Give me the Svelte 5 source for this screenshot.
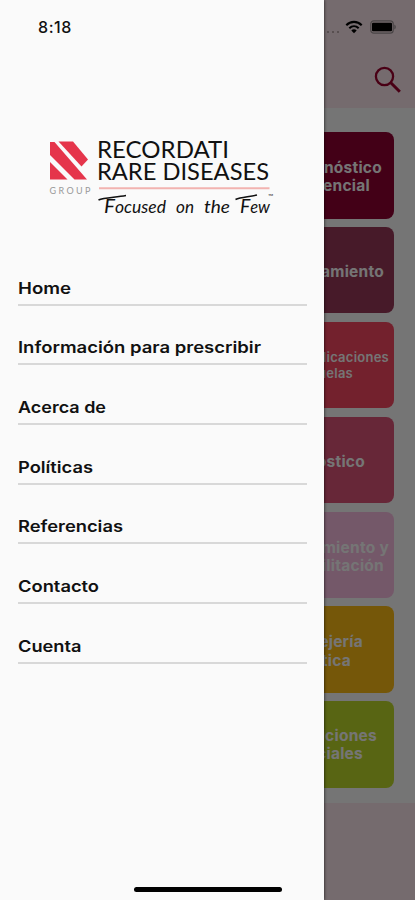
<script lang="ts">
	type Line = { text: string; end: number };
	type Card = { tone: string; small?: boolean; lines: Line[] };

	const menu = [
		{ label: 'Home', width: 53 },
		{ label: 'Información para prescribir', width: 243 },
		{ label: 'Acerca de', width: 88 },
		{ label: 'Políticas', width: 75 },
		{ label: 'Referencias', width: 105 },
		{ label: 'Contacto', width: 81 },
		{ label: 'Cuenta', width: 63.5 }
	];

	// end = distance from the right edge of the card
	const cards: Card[] = [
		{ tone: 'wine', lines: [{ text: 'Diagnóstico', end: 12 }, { text: 'diferencial', end: 24 }] },
		{ tone: 'plum', lines: [{ text: 'Tratamiento', end: 10 }] },
		{ tone: 'red', small: true, lines: [{ text: 'Complicaciones', end: 5 }, { text: 'y secuelas', end: 41 }] },
		{ tone: 'rose', lines: [{ text: 'Pronóstico', end: 29 }] },
		{ tone: 'pink', lines: [{ text: 'Seguimiento y', end: 5 }, { text: 'rehabilitación', end: 10 }] },
		{ tone: 'amber', lines: [{ text: 'Consejería', end: 31 }, { text: 'genética', end: 43 }] },
		{ tone: 'lime', lines: [{ text: 'Condiciones', end: 17 }, { text: 'especiales', end: 31 }] }
	];
</script>

<div class="screen">
	<main class="page">
		<header>
			<div class="status">
				<span class="dots"><i></i><i></i><i></i><i></i></span>
				<svg class="wifi" width="18" height="14" viewBox="0 0 18 14">
					<path d="M1.3 5.2C5.7 .8 12.3 .8 16.7 5.2M4.3 8.2c2.8-2.7 6.6-2.7 9.4 0" fill="none" stroke="#000" stroke-width="2.1" />
					<path d="M6.3 10.4c1.6-1.4 3.8-1.4 5.4 0L9 13.2z" />
				</svg>
				<svg class="battery" width="27" height="14" viewBox="0 0 27 14">
					<rect x=".8" y=".8" width="22.4" height="12.4" rx="3" fill="none" stroke="#a09699" stroke-width="1.2" />
					<rect x="2" y="2.7" width="20" height="8.6" rx="1" />
					<path d="M24.3 4.5c2 .8 2 4.2 0 5z" fill="#a09699" />
				</svg>
			</div>
			<svg class="search" width="28" height="28" viewBox="0 0 28 28" fill="none" stroke="#a0002f">
				<circle cx="10.5" cy="10.5" r="8.6" stroke-width="2.3" />
				<path d="M16.8 16.8l9 9" stroke-width="3" />
			</svg>
		</header>

		<section class="cards">
			{#each cards as card (card.tone)}
				<article class={card.tone} class:small={card.small}>
					{#each card.lines as line (line.text)}
						<span style:padding-right={`${line.end}px`}>{line.text}</span>
					{/each}
				</article>
			{/each}
		</section>
	</main>

	<div class="scrim"></div>

	<aside class="drawer">
		<time>8:18</time>

		<svg class="logo" width="230" height="98" viewBox="48 128 230 98">
			<g fill="#e5354b">
				<path d="M58.5 141.5H73L88 159.5L81.5 166.5Z" />
				<path d="M50 142H54.5L87 179.5H74.5L50 155Z" />
				<path d="M50 162L67.5 179.5H50Z" />
			</g>
			<text class="group" x="49.5" y="194" textLength="41" lengthAdjust="spacing">GROUP</text>
			<text class="brand" x="97" y="157.5" textLength="132" lengthAdjust="spacingAndGlyphs">RECORDATI</text>
			<text class="brand" x="97" y="179.5" textLength="172" lengthAdjust="spacingAndGlyphs">RARE DISEASES</text>
			<path d="M99 188.3H269.5" stroke="#f2b3b0" stroke-width="2" />
			<path class="swash" d="M98.5 200C104 197.5 115 197.5 126 195.5M235.5 199.5C241 197 249 197 257 195" />
			<text class="tagline" x="104" y="213" textLength="62" lengthAdjust="spacingAndGlyphs"><tspan class="cap">F</tspan>ocused</text>
			<text class="tagline" x="176" y="213" textLength="18" lengthAdjust="spacingAndGlyphs">on</text>
			<text class="tagline" x="204" y="213" textLength="26" lengthAdjust="spacingAndGlyphs">the</text>
			<text class="tagline" x="240" y="213" textLength="30" lengthAdjust="spacingAndGlyphs"><tspan class="cap">F</tspan>ew</text>
			<text class="tm" x="268" y="199">™</text>
		</svg>

		<nav>
			{#each menu as item (item.label)}
				<a href="#menu">
					<svg width="289" height="26">
						<text x="0" y="17.8" textLength={item.width} lengthAdjust="spacingAndGlyphs">{item.label}</text>
					</svg>
				</a>
			{/each}
		</nav>

		<div class="home-bar"></div>
	</aside>
</div>

<style>
	:global(body) { margin: 0; }
	.screen { position: relative; width: 415px; height: 900px; overflow: hidden; font-family: Inter, "Open Sans", sans-serif; }
	.page { display: flex; flex-direction: column; height: 900px; background: #ffe9ef; }
	header { display: flex; flex-direction: column; align-items: flex-end; height: 108px; }
	.status { display: flex; align-items: center; height: 14px; padding: 20px 18px 0 0; }
	.dots { display: flex; gap: 3px; margin: 9px 6px 0 0; }
	.dots i { width: 2px; height: 2px; border-radius: 50%; background: #a99; }
	.battery { margin-left: 7px; }
	.search { margin: 32px 13px 0 0; }
	.cards { display: flex; flex-direction: column; align-items: flex-end; gap: 8.4px; height: 671px; padding: 24px 21px 0 0; background: #fefefe; }
	article { display: flex; flex-direction: column; justify-content: center; flex: none; box-sizing: border-box; width: 184px; height: 86.5px; padding-top: 4px; border-radius: 8px; color: #fff; font-size: 15.5px; font-weight: 700; line-height: 18.3px; letter-spacing: .25px; text-align: right; }
	article.small { font-size: 13px; font-weight: 600; line-height: 16px; padding-top: 0; }
	.wine { background: #920034; }
	.plum { background: #9c3a5b; }
	.red { background: #fa4862; }
	.rose { background: #e0557a; }
	.pink { background: #fcbfe4; }
	.amber { background: #ffbd14; }
	article.lime { padding-top: 1px; background: #c1dc2b; }
	.scrim { position: absolute; inset: 0; background: rgba(0, 0, 0, .54); }
	.drawer { position: absolute; inset: 0 auto 0 0; display: flex; flex-direction: column; width: 324px; background: #fafafa; box-shadow: 0 0 3px rgba(0, 0, 0, .8); }
	time { height: 111px; padding: 17px 0 0 38px; font-size: 16px; font-weight: 500; line-height: 20px; letter-spacing: .6px; color: #111; }
	.logo { flex: none; margin-left: 48px; }
	.group { font: 9px Lato, sans-serif; fill: #999; }
	.brand { font: 24px Lato, sans-serif; fill: #111; }
	.tagline { font: italic 400 17px Lato, sans-serif; fill: #111; }
	.cap { font-size: 20px; }
	.swash { fill: none; stroke: #111; stroke-width: 1.6; }
	.tm { font: 7px Lato, sans-serif; fill: #333; }
	nav { display: flex; flex-direction: column; gap: 29.7px; padding: 49.5px 17px 0 18px; }
	nav a { display: block; height: 28px; border-bottom: 2px solid #d8d8d8; }
	nav svg { display: block; }
	nav text { font: 600 16px Inter, sans-serif; fill: #111; }
	.home-bar { width: 148px; height: 5px; margin: auto 0 8px 134px; border-radius: 3px; background: #000; }
</style>
